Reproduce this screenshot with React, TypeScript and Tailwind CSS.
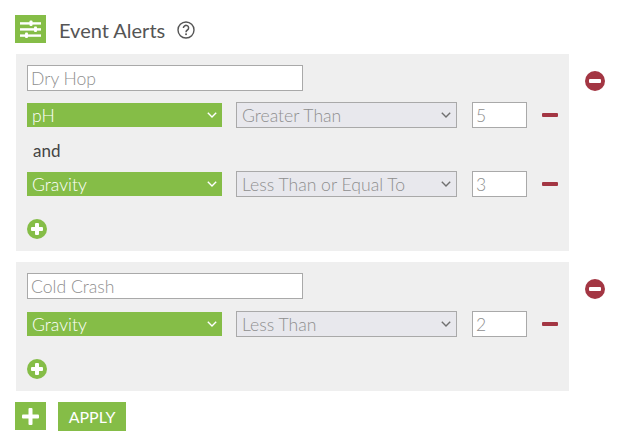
import React from "react";

const GREEN = "bg-[#85bd47]";

function Chevron({ color }: { color: string }) {
  return (
    <svg width="10" height="6" viewBox="0 0 10 6" className="absolute right-[5px] top-1/2 -translate-y-1/2">
      <path d="M0.8 0.8 L5 5 L9.2 0.8" fill="none" stroke={color} strokeWidth="1.4" />
    </svg>
  );
}

function CircleIcon({ plus, color, size }: { plus?: boolean; color: string; size: number }) {
  return (
    <svg width={size} height={size} viewBox="0 0 20 20" className="block">
      <circle cx="10" cy="10" r="10" fill={color} />
      <rect x="4" y="8" width="12" height="4" rx="1" fill="#fff" />
      {plus && <rect x="8" y="4" width="4" height="12" rx="1" fill="#fff" />}
    </svg>
  );
}

function Row({ field, op, val }: { field: string; op: string; val: string }) {
  return (
    <div className="flex items-center h-[26px]">
      <div className={`relative w-[195px] h-6 ${GREEN} text-white pl-[5px] leading-[26px] font-light`}>
        {field}
        <Chevron color="#ffffff" />
      </div>
      <div className="relative ml-[14px] w-[221px] h-[26px] bg-[#e8e8ed] border border-[#a9a9a9] text-[#8f8f8f] pl-[5px] leading-[26px] font-light">
        {op}
        <Chevron color="#6f6f6f" />
      </div>
      <input
        readOnly
        value={val}
        className="ml-[15px] w-[55px] h-[26px] bg-white border border-[#a9a9a9] text-[#8f8f8f] px-[3px] pt-[2px] font-light outline-none"
      />
      <div className="ml-[15px] w-4 h-1 rounded-[1px] bg-[#a33643]" />
    </div>
  );
}

function Panel({ name, children, h, gap }: { name: string; children: React.ReactNode; h: string; gap: string }) {
  return (
    <div className="flex items-start">
      <div className={`w-[553px] ${h} bg-[#efefef] ml-px pl-[11px] pt-[11px]`}>
        <input
          readOnly
          value={name}
          className={`block w-[276px] h-[26px] bg-white border border-[#a9a9a9] text-[#8f8f8f] px-[3px] pt-[2px] font-light outline-none ${gap}`}
        />
        {children}
        <div className="mt-[22px]">
          <CircleIcon plus color="#85bd47" size={20} />
        </div>
      </div>
      <div className="ml-4 mt-[17px]">
        <CircleIcon color="#a33643" size={20} />
      </div>
    </div>
  );
}

export default function App() {
  return (
    <div className="w-[632px] h-[440px] bg-white pl-[15px] pt-[15px] text-[17.6px] font-['Lato',sans-serif] overflow-hidden">
      <div className="flex items-center h-7">
        <div className={`w-[31px] h-7 ${GREEN} flex items-center justify-center`}>
          <svg width="21" height="18" viewBox="0 0 21 18">
            <g fill="#fff">
              <rect x="0" y="2.2" width="21" height="2.4" />
              <rect x="0" y="8.2" width="21" height="2.4" />
              <rect x="0" y="14.4" width="21" height="2.4" />
              <rect x="9.5" y="0.5" width="3" height="5.5" rx="1" />
              <rect x="14" y="6.5" width="3" height="5.5" rx="1" />
              <rect x="5" y="12.5" width="3" height="5.5" rx="1" />
            </g>
          </svg>
        </div>
        <span className="ml-[13px] text-[#555555] text-[20px] leading-7 translate-y-px">Event Alerts</span>
        <svg width="18" height="18" viewBox="0 0 18 18" className="ml-3 translate-y-px">
          <circle cx="9" cy="9" r="8" fill="none" stroke="#555555" strokeWidth="1.4" />
          <path d="M6.4 7 A2.6 2.5 0 1 1 10.4 9 C9.4 9.6 9 10 9 11.2" fill="none" stroke="#555555" strokeWidth="1.5" />
          <rect x="8.2" y="12.4" width="1.7" height="1.7" fill="#555555" />
        </svg>
      </div>
      <div className="mt-[11px]">
        <Panel name="Dry Hop" h="h-[197px]" gap="mb-[11px]">
          <Row field="pH" op="Greater Than" val="5" />
          <div className="h-[43px] flex items-center pl-[6px] text-[#444444] text-[17px] translate-y-px">and</div>
          <Row field="Gravity" op="Less Than or Equal To" val="3" />
        </Panel>
      </div>
      <div className="mt-[11px]">
        <Panel name="Cold Crash" h="h-[129px]" gap="mb-[12px]">
          <Row field="Gravity" op="Less Than" val="2" />
        </Panel>
      </div>
      <div className="flex mt-[11px]">
        <div className={`w-[31px] h-7 ${GREEN} flex items-center justify-center`}>
          <svg width="17" height="17" viewBox="0 0 17 17">
            <rect x="0" y="6.5" width="17" height="4" rx="1" fill="#fff" />
            <rect x="6.5" y="0" width="4" height="17" rx="1" fill="#fff" />
          </svg>
        </div>
        <div className={`ml-3 w-[68px] h-[29px] ${GREEN} text-white text-[16px] flex items-center justify-center`}>
          APPLY
        </div>
      </div>
    </div>
  );
}
